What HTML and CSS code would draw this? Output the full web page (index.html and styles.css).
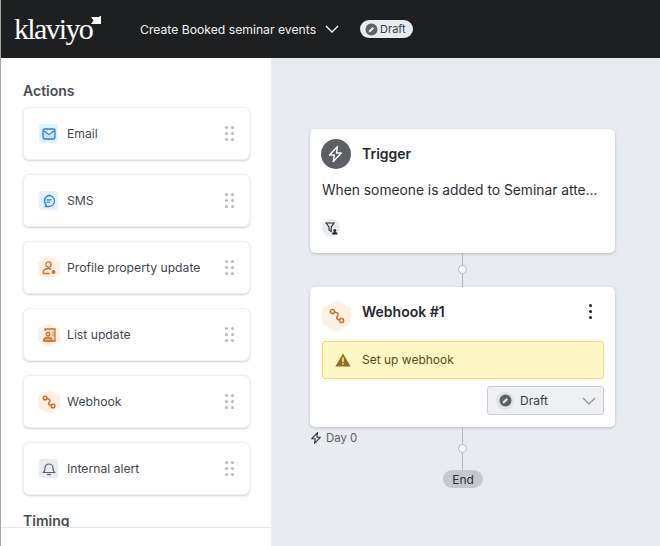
FILE: index.html
```html
<!DOCTYPE html>
<html lang="en">
<head>
    <meta charset="UTF-8">
    <meta name="viewport" content="width=device-width, initial-scale=1.0">
    <title>Create Booked seminar events</title>
    <link rel="stylesheet" href="styles.css">
</head>
<body>
    <header class="topbar">
        <div class="logo">
            <span class="logo-text">klaviyo</span>
            <svg class="logo-flag" width="10" height="8" viewBox="0 0 10 8"><path d="M0 1h8.500V0H10v8H0l2.500-3.500z" fill="#fff"/></svg>
        </div>
        <div class="flow-name">
            <span>Create Booked seminar events</span>
            <svg width="14" height="8" viewBox="0 0 14 8" fill="none" stroke="#fff" stroke-width="1.3"><path d="M1 1l6 6 6-6"/></svg>
        </div>
        <div class="draft-pill">
            <svg width="13" height="13" viewBox="0 0 13 13"><circle cx="6.500" cy="6.500" r="6" fill="#5f6266"/><path d="M3.600 9.400l.6-2.200 3.300-3.300 1.600 1.600-3.300 3.300z" fill="#e8ebef"/></svg>
            <span>Draft</span>
        </div>
    </header>

    <div class="main">
        <aside class="sidebar">
            <div class="sidebar-scroll">
                <h2 class="side-title">Actions</h2>
                <div class="action-list">
                    <div class="action-card">
                        <span class="badge badge-blue">
                            <svg width="14" height="12" viewBox="0 0 14 12" fill="none" stroke="#2f80d8" stroke-width="1.300"><rect x="1" y="1" width="12" height="10" rx="1.500" fill="#c9e6fd"/><path d="M1.200 2.500L7 6.500l5.800-4" fill="#fff"/></svg>
                        </span>
                        <span class="action-label">Email</span>
                        <span class="grip"><i></i><i></i><i></i><i></i><i></i><i></i></span>
                    </div>
                    <div class="action-card">
                        <span class="badge badge-blue">
                            <svg width="14" height="14" viewBox="0 0 14 14" fill="none" stroke="#2f80d8" stroke-width="1.300"><path d="M7 1.500a5.500 5.500 0 1 1 0 11H3.500l.6-1.700A5.500 5.500 0 0 1 7 1.500z"/><path d="M4.500 5.800h5M4.500 8.200h3.500"/></svg>
                        </span>
                        <span class="action-label">SMS</span>
                        <span class="grip"><i></i><i></i><i></i><i></i><i></i><i></i></span>
                    </div>
                    <div class="action-card">
                        <span class="hex">
                            <svg class="hex-bg" width="22" height="24" viewBox="0 0 22 24"><path d="M11 0l11 6v12l-11 6-11-6V6z" fill="#fdf1e3"/></svg>
                            <svg class="hex-icon" width="14" height="14" viewBox="0 0 14 14" fill="none" stroke="#c96f2c" stroke-width="1.300"><circle cx="6.500" cy="3.500" r="2.600"/><path d="M1 12.500c0-3 2-5 5.500-5 1.200 0 2 .2 2.800.6M1 12.500h6.500"/><circle cx="11.500" cy="11" r="1.300" fill="#c96f2c"/></svg>
                        </span>
                        <span class="action-label">Profile property update</span>
                        <span class="grip"><i></i><i></i><i></i><i></i><i></i><i></i></span>
                    </div>
                    <div class="action-card">
                        <span class="hex">
                            <svg class="hex-bg" width="22" height="24" viewBox="0 0 22 24"><path d="M11 0l11 6v12l-11 6-11-6V6z" fill="#fdf1e3"/></svg>
                            <svg class="hex-icon" width="14" height="14" viewBox="0 0 14 14" fill="none" stroke="#c96f2c" stroke-width="1.300"><path d="M3 3V1h10v12H3" fill="#f8dcc0"/><circle cx="6" cy="6.200" r="1.700" fill="#fdf1e3"/><path d="M1.500 13c0-2.200 2-3.500 4.500-3.500s4 1.300 4 3.500z" fill="#e9a873"/><path d="M10.500 4.500h1M10.500 7h1"/></svg>
                        </span>
                        <span class="action-label">List update</span>
                        <span class="grip"><i></i><i></i><i></i><i></i><i></i><i></i></span>
                    </div>
                    <div class="action-card">
                        <span class="hex">
                            <svg class="hex-bg" width="22" height="24" viewBox="0 0 22 24"><path d="M11 0l11 6v12l-11 6-11-6V6z" fill="#fdf1e3"/></svg>
                            <svg class="hex-icon" width="14" height="14" viewBox="0 0 14 14" fill="none" stroke="#c96f2c" stroke-width="1.500"><circle cx="3" cy="3" r="1.800"/><circle cx="11" cy="11" r="1.800"/><path d="M4.800 3.500C7.500 4 9 5 7.500 6.800 6 8.500 6.500 10 9.200 10.500"/></svg>
                        </span>
                        <span class="action-label">Webhook</span>
                        <span class="grip"><i></i><i></i><i></i><i></i><i></i><i></i></span>
                    </div>
                    <div class="action-card">
                        <span class="badge badge-gray">
                            <svg width="14" height="15" viewBox="0 0 14 15" fill="none" stroke="#5f6368" stroke-width="1.200"><path d="M1.500 11.500c1-1 1.500-2 1.500-4.500a4 4 0 0 1 8 0c0 2.500.5 3.500 1.500 4.500z"/><path d="M5 13.500h4"/></svg>
                        </span>
                        <span class="action-label">Internal alert</span>
                        <span class="grip"><i></i><i></i><i></i><i></i><i></i><i></i></span>
                    </div>
                </div>
                <h2 class="side-title side-title-timing">Timing</h2>
            </div>
            <div class="sidebar-footer"></div>
        </aside>

        <section class="canvas">
            <div class="flow">
                <div class="node node-trigger">
                    <div class="node-head">
                        <span class="trigger-icon">
                            <svg width="18" height="18" viewBox="0 0 18 18" fill="none" stroke="#fff" stroke-width="1.400" stroke-linejoin="round"><path d="M10.500 1.500L2.500 10h4.800l-1 6.500 8-8.500H9.500z"/></svg>
                        </span>
                        <span class="node-title node-title-trigger">Trigger</span>
                    </div>
                    <p class="node-text">When someone is added to Seminar atte...</p>
                    <span class="filter-chip">
                        <svg width="13" height="13" viewBox="0 0 13 13"><path d="M1 1h8L6.200 5v4.500L4 8V5z" fill="none" stroke="#26282b" stroke-width="1.100"/><circle cx="9.800" cy="8.500" r="1.500" fill="#26282b"/><path d="M7 12.500c0-1.800 1-2.500 2.800-2.500s2.800.7 2.800 2.500z" fill="#26282b"/></svg>
                    </span>
                </div>

                <div class="link link-short"><span class="link-dot"></span></div>

                <div class="node node-webhook">
                    <div class="node-head node-head-webhook">
                        <span class="hex hex-large">
                            <svg class="hex-bg" width="29" height="32" viewBox="0 0 22 24"><path d="M11 0l11 6v12l-11 6-11-6V6z" fill="#fdf1e3"/></svg>
                            <svg class="hex-icon" width="16" height="16" viewBox="0 0 14 14" fill="none" stroke="#c96f2c" stroke-width="1.300"><circle cx="3" cy="3" r="1.800"/><circle cx="11" cy="11" r="1.800"/><path d="M4.800 3.500C7.500 4 9 5 7.500 6.800 6 8.500 6.500 10 9.200 10.500"/></svg>
                        </span>
                        <span class="node-title node-title-webhook">Webhook #1</span>
                        <span class="kebab"><i></i><i></i><i></i></span>
                    </div>
                    <div class="warning">
                        <svg width="16" height="14" viewBox="0 0 16 14"><path d="M8 .5l7.700 13H.3z" fill="#94701c"/><path d="M7.300 4.500h1.400v4.500H7.300zM7.300 10h1.400v1.500H7.300z" fill="#fff7c6"/></svg>
                        <span>Set up webhook</span>
                    </div>
                    <div class="status-row">
                        <div class="status-select">
                            <span class="status-icon">
                                <svg width="13" height="13" viewBox="0 0 13 13"><circle cx="6.500" cy="6.500" r="6" fill="#5f6266"/><path d="M3.600 9.400l.6-2.200 3.300-3.300 1.600 1.600-3.300 3.300z" fill="#e8ebef"/></svg>
                            </span>
                            <span class="status-text">Draft</span>
                            <svg width="14" height="8" viewBox="0 0 14 8" fill="none" stroke="#8b9097" stroke-width="1.100"><path d="M1 1l6 6 6-6"/></svg>
                        </div>
                    </div>
                </div>

                <div class="link link-long">
                    <span class="day-label">
                        <svg width="13" height="14" viewBox="0 0 18 18" fill="none" stroke="#33363a" stroke-width="1.600" stroke-linejoin="round"><path d="M10.500 1.500L2.500 10h4.800l-1 6.500 8-8.500H9.500z"/></svg>
                        Day 0
                    </span>
                    <span class="link-dot"></span>
                </div>

                <div class="end-pill">End</div>
            </div>
        </section>
    </div>
</body>
</html>
```

FILE: styles.css
```css
* {
    box-sizing: border-box;
}
html, body {
    height: 100%;
}
body {
    margin: 0;
    height: 546px;
    overflow: hidden;
    display: flex;
    flex-direction: column;
    font-family: Inter, "Liberation Sans", sans-serif;
    background-color: #e8ebef;
    border-left: 1px solid #a9a69f;
}
.topbar {
    height: 58px;
    flex: none;
    display: flex;
    align-items: center;
    background-color: #1e1f21;
    color: #fff;
    padding-left: 13px;
}
.logo {
    display: flex;
    align-items: flex-start;
    width: 126px;
    height: 30px;
}
.logo-text {
    font-family: "Liberation Serif", serif;
    font-size: 30px;
    line-height: 30px;
    letter-spacing: -1.700px;
}
.logo-flag {
    margin: 2px 0 0 -1px;
}
.flow-name {
    display: flex;
    align-items: center;
    gap: 9px;
    font-size: 12.200px;
    color: #f1f2f3;
}
.draft-pill {
    margin-left: 21px;
    height: 18px;
    width: 53px;
    display: flex;
    align-items: center;
    gap: 2px;
    padding-left: 5px;
    border-radius: 9px;
    background-color: #e8ebef;
    color: #3a3d41;
    font-size: 11px;
}
.main {
    flex: 1;
    display: flex;
    min-height: 0;
}
.sidebar {
    width: 270px;
    flex: none;
    display: flex;
    flex-direction: column;
    background-color: #fff;
}
.sidebar-scroll {
    height: 469px;
    overflow: hidden;
    padding: 24px 21px 0 22px;
}
.sidebar-footer {
    flex: 1;
    border-top: 1px solid #e3e5e8;
}
.side-title {
    margin: 0 0 8px;
    font-size: 14px;
    line-height: 17px;
    font-weight: 600;
    color: #4a4d50;
}
.side-title-timing {
    margin: 17px 0 0;
}
.action-list {
    display: flex;
    flex-direction: column;
    gap: 14px;
}
.action-card {
    height: 53px;
    display: flex;
    align-items: center;
    gap: 9px;
    padding: 0 15px;
    background-color: #fff;
    border: 1px solid #eff0f2;
    border-radius: 6px;
    box-shadow: 0 1px 2px rgba(40, 45, 55, 0.22);
}
.action-label {
    flex: 1;
    font-size: 12.200px;
    color: #43474d;
}
.badge {
    width: 19px;
    height: 19px;
    flex: none;
    display: flex;
    align-items: center;
    justify-content: center;
    border-radius: 3px;
}
.badge-blue {
    background-color: #dff2fe;
}
.badge-gray {
    background-color: #e8ebef;
}
.hex {
    position: relative;
    width: 19px;
    height: 24px;
    flex: none;
    display: flex;
    align-items: center;
    justify-content: center;
}
.hex-bg {
    position: absolute;
    left: -1px;
    top: 0;
}
.hex-icon {
    position: relative;
}
.hex-large {
    width: 29px;
    height: 32px;
}
.hex-large .hex-bg {
    left: 0;
}
.grip {
    width: 9px;
    display: grid;
    grid-template-columns: 3px 3px;
    gap: 2.500px 3px;
    justify-content: space-between;
}
.grip i {
    width: 3.400px;
    height: 3.400px;
    border-radius: 50%;
    background-color: #b4b8bd;
}
.canvas {
    flex: 1;
    padding: 71px 0 0 39px;
}
.flow {
    width: 305px;
    display: flex;
    flex-direction: column;
}
.node {
    background-color: #fff;
    border-radius: 5px;
    box-shadow: 0 1px 3px rgba(40, 45, 55, 0.25);
}
.node-trigger {
    height: 124px;
    padding: 10px 12px 10px 11px;
}
.node-webhook {
    height: 140px;
    padding: 13px 11px 0 12px;
}
.node-head {
    display: flex;
    align-items: center;
    gap: 11px;
}
.node-head-webhook {
    height: 32px;
}
.node-title {
    flex: 1;
    font-size: 14px;
    font-weight: 600;
    color: #26282b;
}
.node-title-trigger {
    margin-bottom: 1px;
}
.node-title-webhook {
    margin-bottom: 9px;
}
.trigger-icon {
    width: 30px;
    height: 30px;
    display: flex;
    align-items: center;
    justify-content: center;
    border-radius: 50%;
    background-color: #5c5f63;
}
.node-text {
    margin: 12px 0 0 1px;
    font-size: 13.800px;
    line-height: 18px;
    color: #2b2d30;
    white-space: nowrap;
}
.filter-chip {
    margin: 20px 0 0 1px;
    width: 18px;
    height: 18px;
    display: flex;
    align-items: center;
    justify-content: center;
    border-radius: 50%;
    background-color: #e8ebef;
}
.kebab {
    display: flex;
    flex-direction: column;
    gap: 3px;
    margin: 0 12px 9px 0;
}
.kebab i {
    width: 3px;
    height: 3px;
    border-radius: 50%;
    background-color: #202124;
}
.warning {
    margin-top: 9px;
    height: 38px;
    display: flex;
    align-items: center;
    gap: 11px;
    padding: 0 0 1px 12px;
    border: 1px solid #f5d96b;
    border-radius: 3px;
    background-color: #fff7c6;
    font-size: 12px;
    color: #5c4a1a;
}
.status-row {
    display: flex;
    justify-content: flex-end;
    margin-top: 7px;
}
.status-select {
    width: 117px;
    height: 29px;
    display: flex;
    align-items: center;
    padding: 0 7px 0 8px;
    border: 1px solid #c9cdd2;
    border-radius: 3px;
    background-color: #eef0f3;
}
.status-icon {
    width: 18px;
    height: 18px;
    display: flex;
    align-items: center;
    justify-content: center;
    border-radius: 50%;
    background-color: #e0e3e7;
}
.status-text {
    flex: 1;
    margin-left: 6px;
    font-size: 12px;
    color: #3a3d41;
}
.link {
    position: relative;
    width: 1px;
    margin-left: 152px;
    background-color: #b5b9be;
}
.link-short {
    height: 34px;
}
.link-long {
    height: 43px;
}
.link-dot {
    position: absolute;
    left: -4px;
    width: 9px;
    height: 9px;
    border: 1px solid #b5b9be;
    border-radius: 50%;
    background-color: #fff;
}
.link-short .link-dot {
    top: 12px;
}
.link-long .link-dot {
    top: 17px;
}
.day-label {
    position: absolute;
    left: -152px;
    top: 4px;
    display: flex;
    align-items: center;
    gap: 3px;
    font-size: 11.400px;
    color: #5b5f65;
    white-space: nowrap;
}
.end-pill {
    align-self: flex-start;
    margin-left: 133px;
    width: 40px;
    height: 18px;
    display: flex;
    align-items: center;
    justify-content: center;
    border-radius: 9px;
    background-color: #c5c9cf;
    font-size: 12px;
    color: #2b2d30;
}
```
